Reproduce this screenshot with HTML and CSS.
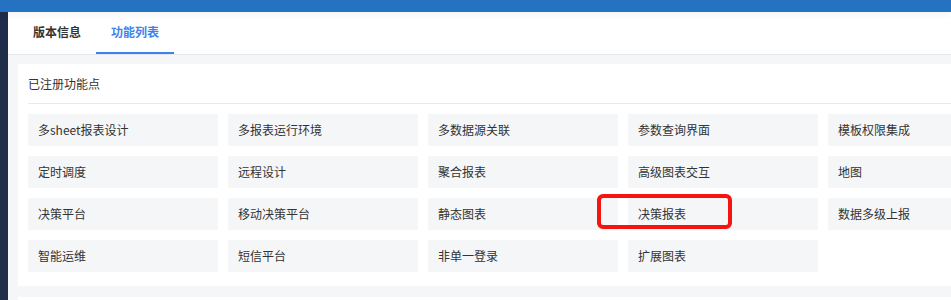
FILE: index.html
```html
<!DOCTYPE html>
<html>
    <head>
        <meta charset="utf-8">
        <link rel="stylesheet" href="styles.css">
    </head>
    <body>
        <div class="topbar"></div>
        <div class="layout">
            <div class="sidebar"></div>
            <div class="content">
                <div class="tabs">
                    <div class="tab">版本信息</div>
                    <div class="tab active">功能列表</div>
                </div>
                <div class="panel">
                    <div class="card">
                        <div class="card-title">已注册功能点</div>
                        <div class="grid">
                            <div class="item">多sheet报表设计</div>
                            <div class="item">多报表运行环境</div>
                            <div class="item">多数据源关联</div>
                            <div class="item">参数查询界面</div>
                            <div class="item">模板权限集成</div>
                            <div class="item">定时调度</div>
                            <div class="item">远程设计</div>
                            <div class="item">聚合报表</div>
                            <div class="item">高级图表交互</div>
                            <div class="item">地图</div>
                            <div class="item">决策平台</div>
                            <div class="item">移动决策平台</div>
                            <div class="item">静态图表</div>
                            <div class="item marked">决策报表<span class="mark"></span></div>
                            <div class="item">数据多级上报</div>
                            <div class="item">智能运维</div>
                            <div class="item">短信平台</div>
                            <div class="item">非单一登录</div>
                            <div class="item">扩展图表</div>
                        </div>
                    </div>
                    <div class="card"></div>
                </div>
            </div>
        </div>
    </body>
</html>
```

FILE: styles.css
```css
html, body { margin: 0; padding: 0; height: 100%; overflow: hidden; }
body {
    font-family: "Noto Sans CJK SC", "Noto Sans", sans-serif;
    font-size: 12px;
    color: #333;
    background: #fff;
}
.topbar {
    height: 12px;
    background: #2672c2;
    position: relative;
    z-index: 2;
    box-shadow: 0 2px 8px rgba(0, 0, 0, 0.06);
}
.layout { display: flex; height: 288px; }
.sidebar { width: 8px; flex: none; background: #1f2d4a; }
.content { flex: 1; display: flex; flex-direction: column; background: #f5f6f8; }

.tabs {
    display: flex;
    height: 42px;
    padding-left: 10px;
    background: #fff;
    border-bottom: 1px solid #e4e7ed;
}
.tab {
    padding: 0 15px;
    line-height: 40px;
    font-weight: bold;
    color: #333;
    border-bottom: 2px solid transparent;
}
.tab.active { color: #3d82ec; border-bottom-color: #3d82ec; }

.panel { padding: 9px 0 0 10px; display: flex; flex-direction: column; gap: 11px; }
.card { background: #fff; width: 1010px; padding: 0 0 14px; }
.card-title {
    margin: 0 10px;
    height: 39px;
    line-height: 39px;
    border-bottom: 1px solid #e8e9ec;
}
.grid {
    display: grid;
    grid-template-columns: repeat(5, 190px);
    gap: 10px;
    padding: 10px 10px 0;
}
.item {
    height: 32px;
    line-height: 32px;
    padding-left: 10px;
    background: #f5f6f8;
    color: #333;
}
.marked { position: relative; }
.mark {
    position: absolute;
    left: -31px;
    top: -4px;
    width: 127px;
    height: 27px;
    border: 4px solid #f5140f;
    border-radius: 6px;
}
```
